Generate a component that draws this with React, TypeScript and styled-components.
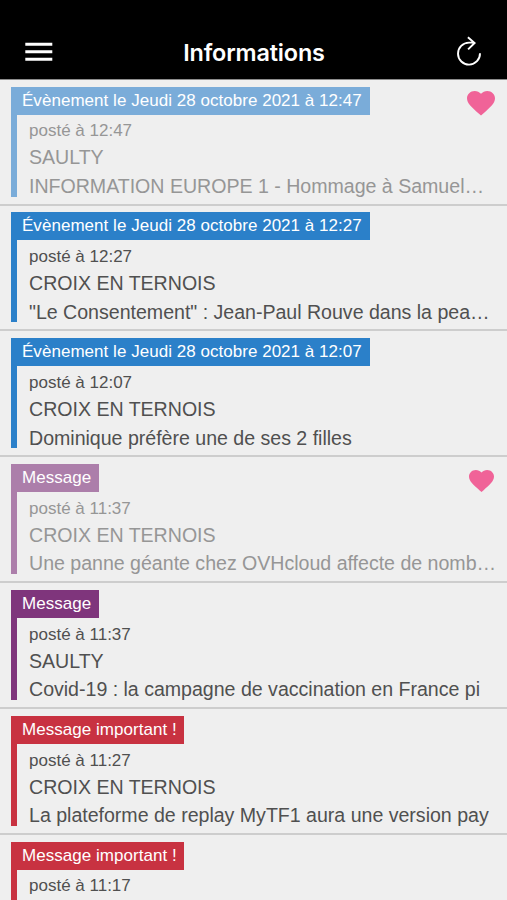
import React from "react";
import styled, { createGlobalStyle } from "styled-components";

const GlobalStyle = createGlobalStyle`
  html, body { margin: 0; padding: 0; background: #efefef; }
  body { height: 900px; overflow: hidden; }
  * { box-sizing: border-box; }
`;

const Screen = styled.main`
  width: 507px;
  height: 900px;
  overflow: hidden;
  background: #efefef;
  color: #505050;
  font-family: "Liberation Sans", Arial, sans-serif;
`;

const Header = styled.header`
  display: grid;
  grid-template-columns: 64px 1fr 64px;
  align-items: center;
  height: 79.7px;
  padding-top: 25px;
  border-bottom: 1px solid #8c8c8c;
  background: #000;
  color: #fff;
`;

const Title = styled.h1`
  margin: 0;
  padding: 2px 0 0 1px;
  text-align: center;
  font: 575 23.4px/30px Inter, sans-serif;
  letter-spacing: -0.15px;
  white-space: nowrap;
`;

const IconButton = styled.button<{ $end?: boolean }>`
  display: flex;
  justify-content: ${(p) => (p.$end ? "flex-end" : "flex-start")};
  padding: ${(p) => (p.$end ? "0 24px 0 0" : "0 0 0 25px")};
  border: 0;
  background: none;
  color: inherit;
`;

const Item = styled.article`
  position: relative;
  height: 125.83px;
  padding: 6.9px 0 0 11px;
  border-bottom: 2px solid #cdcdcd;
`;

const Body = styled.div<{ $color: string }>`
  height: 110px;
  border-left: 6px solid ${(p) => p.$color};
`;

const Tag = styled.div<{ $color: string; $width: number }>`
  width: ${(p) => p.$width}px;
  height: 28px;
  margin-left: -6px;
  padding-left: 11px;
  background: ${(p) => p.$color};
  color: #fff;
  font-size: 17px;
  letter-spacing: 0.035px;
  line-height: 28.6px;
  white-space: nowrap;
`;

const Line = styled.p`
  margin: 0 0 0 12px;
  font-size: 19.6px;
  line-height: 28px;
  letter-spacing: -0.02px;
  white-space: nowrap;
`;

const Posted = styled(Line)`
  padding-top: 2.8px;
  font-size: 17px;
  letter-spacing: 0;
  height: 29.8px;
`;

const Place = styled(Line)`
  height: 27.5px;
  line-height: 26px;
`;

const Texts = styled.div<{ $read?: boolean }>`
  color: ${(p) => (p.$read ? "#969696" : "#505050")};
`;

const HeartBox = styled.span<{ $small?: boolean }>`
  position: absolute;
  top: ${(p) => (p.$small ? 12.6 : 11.5)}px;
  right: ${(p) => (p.$small ? 13.5 : 12)}px;
  width: ${(p) => (p.$small ? 25 : 28)}px;
  height: ${(p) => (p.$small ? 22 : 24.5)}px;
  svg { display: block; width: 100%; height: 100%; }
`;

type Entry = {
  tag: string;
  color: string;
  tagWidth: number;
  time: string;
  place?: string;
  text?: string;
  read?: boolean;
  heart?: "small" | "large";
};

const entries: Entry[] = [
  { tag: "Évènement le Jeudi 28 octobre 2021 à 12:47", color: "#7aacd9", tagWidth: 359, time: "12:47", place: "SAULTY", text: "INFORMATION EUROPE 1 - Hommage à Samuel…", read: true, heart: "large" },
  { tag: "Évènement le Jeudi 28 octobre 2021 à 12:27", color: "#2b80c9", tagWidth: 359, time: "12:27", place: "CROIX EN TERNOIS", text: "\"Le Consentement\" : Jean-Paul Rouve dans la pea…" },
  { tag: "Évènement le Jeudi 28 octobre 2021 à 12:07", color: "#2b80c9", tagWidth: 359, time: "12:07", place: "CROIX EN TERNOIS", text: "Dominique préfère une de ses 2 filles" },
  { tag: "Message", color: "#ac7eaa", tagWidth: 87.7, time: "11:37", place: "CROIX EN TERNOIS", text: "Une panne géante chez OVHcloud affecte de nomb…", read: true, heart: "small" },
  { tag: "Message", color: "#7f357c", tagWidth: 87.7, time: "11:37", place: "SAULTY", text: "Covid-19 : la campagne de vaccination en France pi" },
  { tag: "Message important !", color: "#c83241", tagWidth: 173, time: "11:27", place: "CROIX EN TERNOIS", text: "La plateforme de replay MyTF1 aura une version pay" },
  { tag: "Message important !", color: "#c83241", tagWidth: 173, time: "11:17" },
];

function MenuIcon() {
  return (
    <svg width="28" height="20" viewBox="0 0 28 20" fill="#fff">
      <path d="M.3 .8h27v3H.3zM.3 8.3h27v3H.3zM.3 15.8h27v3H.3z" />
    </svg>
  );
}

function ReloadIcon() {
  return (
    <svg width="28" height="32" viewBox="0 0 28 32" fill="none" stroke="#fff" strokeWidth="1.9">
      <path d="M25 17.3A11 11 0 1 1 14 6.6H19.4M12.9 1.3L19.6 7L13.1 13.4" />
    </svg>
  );
}

function Heart({ small }: { small?: boolean }) {
  return (
    <HeartBox $small={small}>
      <svg viewBox="2 3 20 18.35" preserveAspectRatio="none" fill="#f06398">
        <path d="M12 21.35l-1.45-1.32C5.4 15.36 2 12.28 2 8.5 2 5.42 4.42 3 7.5 3c1.74 0 3.41.81 4.5 2.09C13.09 3.81 14.76 3 16.5 3 19.58 3 22 5.42 22 8.5c0 3.78-3.4 6.86-8.55 11.54L12 21.35z" />
      </svg>
    </HeartBox>
  );
}

export default function App() {
  return (
    <>
      <GlobalStyle />
      <Screen>
        <Header>
          <IconButton aria-label="Menu"><MenuIcon /></IconButton>
          <Title>Informations</Title>
          <IconButton $end aria-label="Actualiser"><ReloadIcon /></IconButton>
        </Header>
        {entries.map((e, i) => (
          <Item key={i}>
            <Body $color={e.color}>
              <Tag $color={e.color} $width={e.tagWidth}>{e.tag}</Tag>
              <Texts $read={e.read}>
                <Posted>posté à {e.time}</Posted>
                {e.place && <Place>{e.place}</Place>}
                {e.text && <Line>{e.text}</Line>}
              </Texts>
            </Body>
            {e.heart && <Heart small={e.heart === "small"} />}
          </Item>
        ))}
      </Screen>
    </>
  );
}
